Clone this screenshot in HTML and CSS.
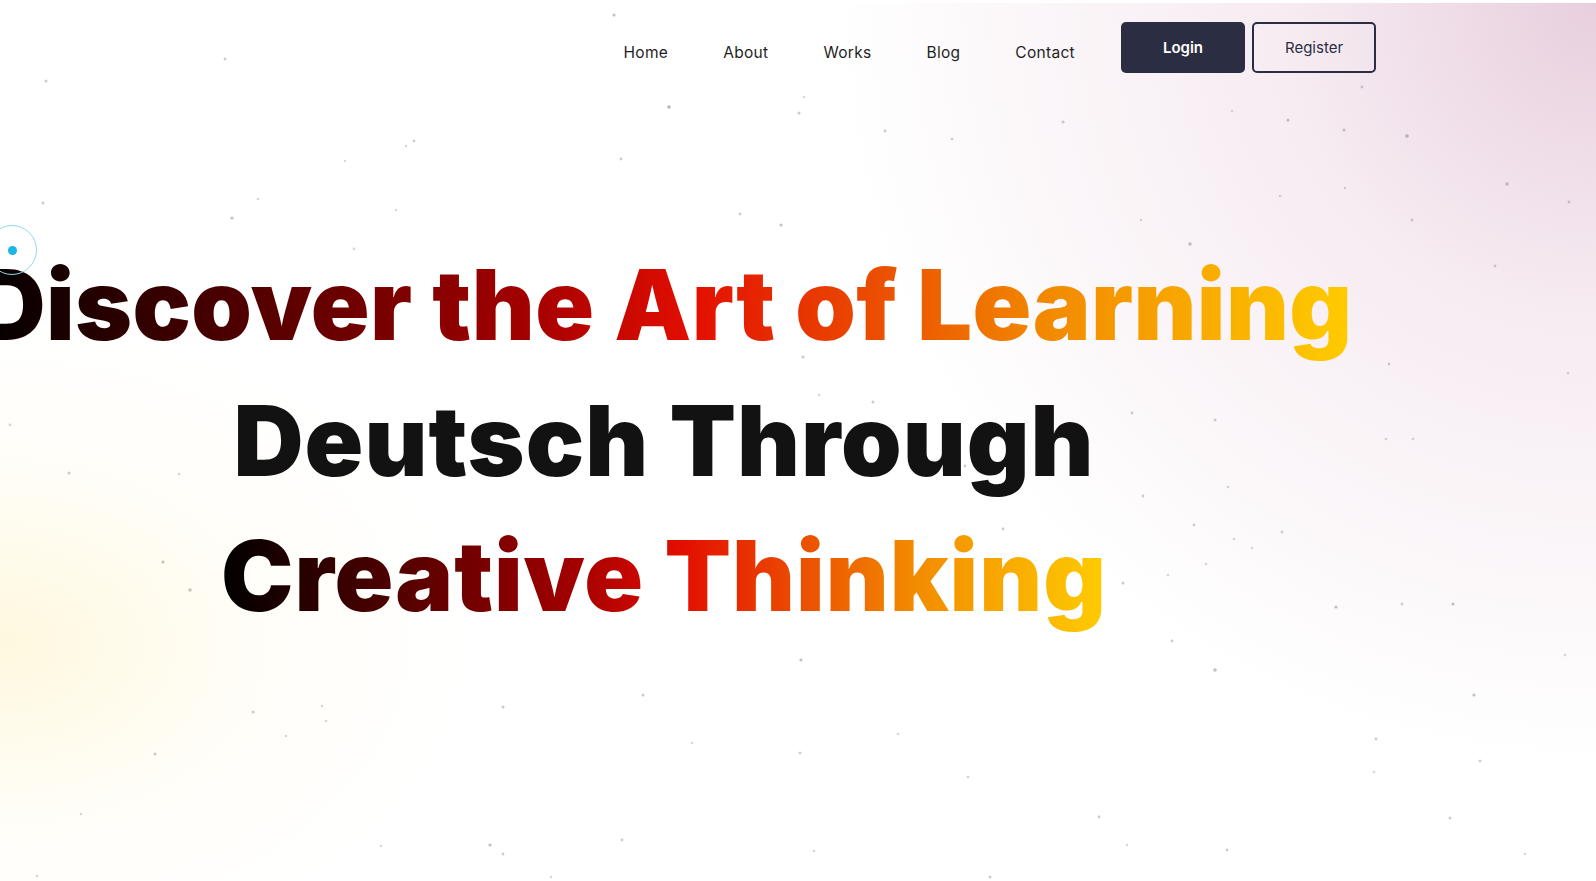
FILE: index.html
```html
<!DOCTYPE html>
<html lang="en">
<head>
<meta charset="utf-8">
<title>Deutsch Through Creative Thinking</title>
<link rel="stylesheet" href="styles.css">
</head>
<body>
<div class="page">
  <svg class="particles" viewBox="0 0 1596 881" aria-hidden="true">
    <g fill="#9a9a9a">
      <circle cx="614" cy="12" r="1.6" opacity=".6"/><circle cx="225" cy="56" r="1.4" opacity=".5"/>
      <circle cx="46" cy="78" r="1.5" opacity=".5"/><circle cx="669" cy="104" r="1.8" opacity=".7"/>
      <circle cx="799" cy="110" r="1.5" opacity=".5"/><circle cx="804" cy="94" r="1.3" opacity=".4"/>
      <circle cx="885" cy="128" r="1.4" opacity=".5"/><circle cx="952" cy="136" r="1.3" opacity=".5"/>
      <circle cx="1063" cy="119" r="1.6" opacity=".5"/><circle cx="1288" cy="117" r="1.5" opacity=".6"/>
      <circle cx="1344" cy="127" r="1.5" opacity=".6"/><circle cx="1407" cy="133" r="1.8" opacity=".7"/>
      <circle cx="414" cy="138" r="1.4" opacity=".5"/><circle cx="406" cy="143" r="1.2" opacity=".4"/>
      <circle cx="621" cy="156" r="1.4" opacity=".5"/><circle cx="345" cy="158" r="1.2" opacity=".4"/>
      <circle cx="1507" cy="181" r="1.7" opacity=".6"/><circle cx="1569" cy="199" r="1.4" opacity=".5"/>
      <circle cx="43" cy="200" r="1.5" opacity=".5"/><circle cx="258" cy="196" r="1.3" opacity=".4"/>
      <circle cx="232" cy="215" r="1.6" opacity=".6"/><circle cx="740" cy="211" r="1.4" opacity=".5"/>
      <circle cx="781" cy="222" r="1.6" opacity=".6"/><circle cx="1280" cy="193" r="1.3" opacity=".4"/>
      <circle cx="1412" cy="217" r="1.4" opacity=".5"/><circle cx="1141" cy="217" r="1.3" opacity=".4"/>
      <circle cx="1190" cy="241" r="1.8" opacity=".6"/><circle cx="1495" cy="263" r="1.4" opacity=".5"/>
      <circle cx="354" cy="246" r="1.4" opacity=".4"/><circle cx="396" cy="207" r="1.3" opacity=".4"/>
      <circle cx="1389" cy="361" r="1.4" opacity=".5"/><circle cx="1568" cy="370" r="1.3" opacity=".4"/>
      <circle cx="803" cy="354" r="1.6" opacity=".5"/><circle cx="873" cy="399" r="1.5" opacity=".5"/>
      <circle cx="819" cy="392" r="1.3" opacity=".4"/><circle cx="1132" cy="410" r="1.4" opacity=".5"/>
      <circle cx="1215" cy="417" r="1.5" opacity=".5"/><circle cx="1386" cy="436" r="1.3" opacity=".4"/>
      <circle cx="1413" cy="436" r="1.3" opacity=".4"/><circle cx="10" cy="422" r="1.4" opacity=".4"/>
      <circle cx="69" cy="470" r="1.5" opacity=".5"/><circle cx="179" cy="471" r="1.3" opacity=".4"/>
      <circle cx="965" cy="463" r="1.4" opacity=".5"/><circle cx="1143" cy="493" r="1.4" opacity=".5"/>
      <circle cx="1228" cy="484" r="1.3" opacity=".4"/><circle cx="1194" cy="522" r="1.4" opacity=".5"/>
      <circle cx="1282" cy="529" r="1.4" opacity=".5"/><circle cx="1234" cy="536" r="1.3" opacity=".4"/>
      <circle cx="1003" cy="526" r="1.4" opacity=".5"/><circle cx="163" cy="559" r="1.6" opacity=".6"/>
      <circle cx="190" cy="587" r="1.7" opacity=".6"/><circle cx="1123" cy="580" r="1.5" opacity=".5"/>
      <circle cx="1168" cy="572" r="1.3" opacity=".4"/><circle cx="1336" cy="604" r="1.6" opacity=".6"/>
      <circle cx="1402" cy="601" r="1.4" opacity=".5"/><circle cx="1453" cy="601" r="1.6" opacity=".6"/>
      <circle cx="1206" cy="561" r="1.3" opacity=".4"/><circle cx="1252" cy="545" r="1.2" opacity=".4"/>
      <circle cx="1172" cy="638" r="1.4" opacity=".5"/><circle cx="1215" cy="667" r="1.8" opacity=".6"/>
      <circle cx="801" cy="657" r="1.6" opacity=".6"/><circle cx="643" cy="692" r="1.5" opacity=".5"/>
      <circle cx="503" cy="704" r="1.5" opacity=".5"/><circle cx="253" cy="709" r="1.5" opacity=".5"/>
      <circle cx="322" cy="703" r="1.2" opacity=".4"/><circle cx="326" cy="718" r="1.3" opacity=".4"/>
      <circle cx="286" cy="733" r="1.3" opacity=".4"/><circle cx="155" cy="751" r="1.5" opacity=".5"/>
      <circle cx="898" cy="731" r="1.3" opacity=".4"/><circle cx="692" cy="740" r="1.3" opacity=".4"/>
      <circle cx="800" cy="750" r="1.5" opacity=".5"/><circle cx="1474" cy="692" r="1.6" opacity=".6"/>
      <circle cx="1376" cy="736" r="1.4" opacity=".5"/><circle cx="1480" cy="758" r="1.5" opacity=".5"/>
      <circle cx="1374" cy="769" r="1.3" opacity=".4"/><circle cx="1565" cy="652" r="1.3" opacity=".4"/>
      <circle cx="968" cy="774" r="1.3" opacity=".4"/><circle cx="1099" cy="814" r="1.4" opacity=".5"/>
      <circle cx="1127" cy="842" r="1.3" opacity=".4"/><circle cx="1450" cy="815" r="1.5" opacity=".5"/>
      <circle cx="1227" cy="847" r="1.4" opacity=".5"/><circle cx="1525" cy="851" r="1.3" opacity=".4"/>
      <circle cx="622" cy="837" r="1.4" opacity=".5"/><circle cx="490" cy="842" r="1.6" opacity=".6"/>
      <circle cx="503" cy="851" r="1.4" opacity=".5"/><circle cx="551" cy="874" r="1.3" opacity=".4"/>
      <circle cx="381" cy="843" r="1.3" opacity=".4"/><circle cx="990" cy="874" r="1.5" opacity=".5"/>
      <circle cx="814" cy="848" r="1.3" opacity=".4"/><circle cx="81" cy="811" r="1.3" opacity=".4"/>
      <circle cx="37" cy="873" r="1.3" opacity=".4"/><circle cx="1345" cy="185" r="1.3" opacity=".4"/>
      <circle cx="1232" cy="108" r="1.2" opacity=".4"/><circle cx="1362" cy="84" r="1.4" opacity=".5"/>
    </g>
  </svg>

  <div class="cursor"><span class="cursor-dot"></span></div>

  <header class="topbar">
    <nav class="nav">
      <ul class="nav-links">
        <li><a href="#">Home</a></li>
        <li><a href="#">About</a></li>
        <li><a href="#">Works</a></li>
        <li><a href="#">Blog</a></li>
        <li><a href="#">Contact</a></li>
      </ul>
      <div class="nav-actions">
        <a class="btn btn-login" href="#">Login</a>
        <a class="btn btn-register" href="#">Register</a>
      </div>
    </nav>
  </header>

  <main class="hero">
    <h1 class="headline">
      <span class="line grad line-wide">Discover the Art of Learning</span>
      <span class="line plain">Deutsch Through</span>
      <span class="line grad">Creative Thinking</span>
    </h1>
  </main>
</div>
</body>
</html>
```

FILE: styles.css
```css
* { box-sizing: border-box; }

html, body {
  margin: 0;
  padding: 0;
  height: 100%;
  overflow: hidden;
}

body {
  font-family: "Inter", "Liberation Sans", sans-serif;
  color: #1a1a1a;
  background: #ffffff;
}

.page {
  position: relative;
  height: 881px;
  overflow: hidden;
  background:
    radial-gradient(ellipse 480px 330px at 0% 640px, rgba(255, 246, 212, 0.75), rgba(255, 250, 232, 0.3) 55%, rgba(255, 255, 255, 0) 100%),
    radial-gradient(ellipse 760px 760px at 100% 0%, rgba(232, 207, 222, 1), rgba(240, 222, 232, 0.6) 40%, rgba(255, 255, 255, 0) 100%),
    #ffffff;
  border-top: 3px solid #ffffff;
}

.particles {
  position: absolute;
  inset: 0;
  width: 1596px;
  height: 881px;
  pointer-events: none;
}

.cursor {
  position: absolute;
  left: -13px;
  top: 222px;
  width: 50px;
  height: 50px;
  border: 1px solid #8fd8ec;
  border-radius: 50%;
  display: flex;
  align-items: center;
  justify-content: center;
  z-index: 3;
}

.cursor-dot {
  width: 9px;
  height: 9px;
  border-radius: 50%;
  background: #19b6e6;
}

.topbar {
  position: relative;
  z-index: 2;
  width: 1156px;
  margin: 0 auto;
  padding-top: 19px;
}

.nav {
  display: flex;
  justify-content: flex-end;
  align-items: flex-start;
}

.nav-links {
  display: flex;
  list-style: none;
  margin: 0;
  padding: 0;
  gap: 55px;
  margin-right: 46px;
  padding-top: 19px;
}

.nav-links a {
  font-size: 15.5px;
  line-height: 24px;
  letter-spacing: 0.3px;
  color: #1f1f1f;
  text-decoration: none;
}

.nav-actions {
  display: flex;
  gap: 7px;
}

.btn {
  display: flex;
  align-items: center;
  justify-content: center;
  width: 124px;
  height: 51px;
  border-radius: 5px;
  font-size: 15px;
  text-decoration: none;
  padding-bottom: 1px;
}

.btn-login {
  background: #2b2d42;
  color: #ffffff;
  font-weight: 600;
}

.btn-register {
  border: 2px solid #2b2d42;
  color: #2b2d42;
  font-weight: 400;
}

.hero {
  position: relative;
  z-index: 1;
  padding-right: 268px;
}

.headline {
  margin: 0;
  padding-top: 164px;
  display: flex;
  flex-direction: column;
  align-items: center;
  font-family: "Inter", "Liberation Sans", sans-serif;
  font-weight: 900;
  font-size: 97px;
  line-height: 135.5px;
  letter-spacing: 1px;
}

.line {
  display: block;
  white-space: nowrap;
}

.line-wide {
  letter-spacing: 0.4px;
}

.plain {
  color: #121212;
}

.grad {
  background: linear-gradient(90deg, #000000 0%, #3a0000 14%, #a30000 40%, #e30e00 52%, #f28a00 78%, #ffcc00 100%);
  -webkit-background-clip: text;
  background-clip: text;
  color: transparent;
}
```
